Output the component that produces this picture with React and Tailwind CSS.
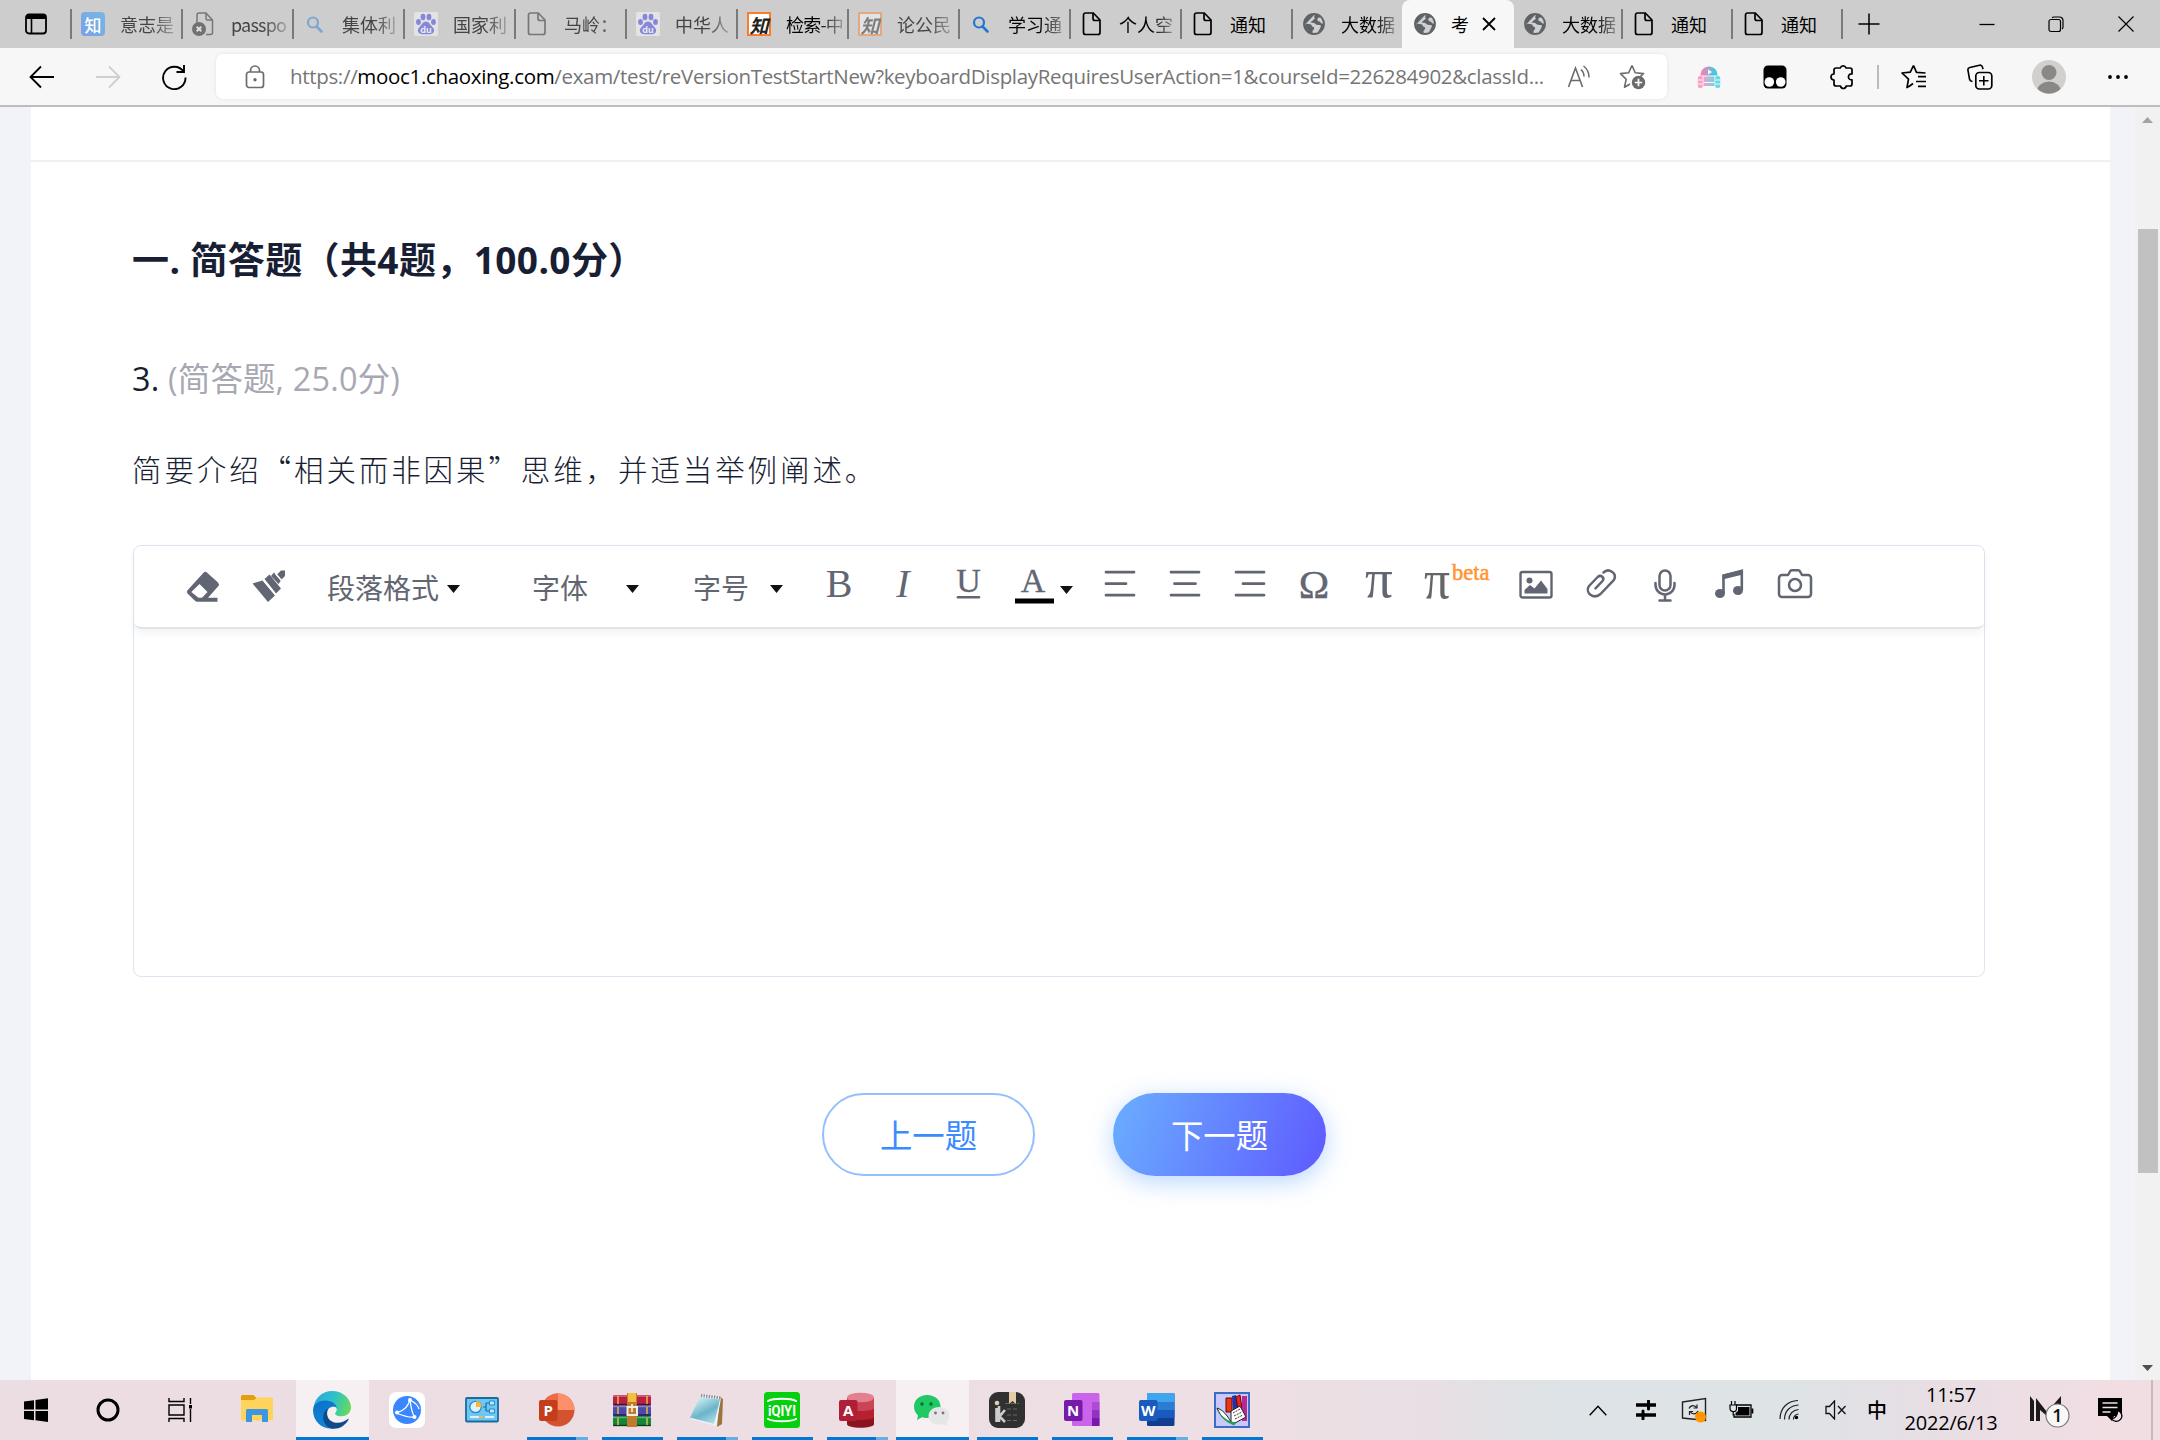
import React from "react";

const Svg = ({ w = 24, h = 24, vb, className = "", children }) => (
  <svg width={w} height={h} viewBox={vb || `0 0 ${w} ${h}`} fill="none" className={"shrink-0 " + className}>
    {children}
  </svg>
);

/* ---------- favicons ---------- */
const PageIcon = ({ c = "#000" }) => (
  <Svg>
    <path d="M5.5 1h7.8L20 8v12.5a2 2 0 0 1-2 2H5.500a2 2 0 0 1-2-2V3a2 2 0 0 1 2-2Z" stroke={c} strokeWidth="1.7" />
    <path d="M13 1.300V6.500a2 2 0 0 0 2 2h5" stroke={c} strokeWidth="1.700" />
  </Svg>
);
const BrokenPage = () => (
  <Svg>
    <path d="M5 11V3a2 2 0 0 1 2-2h7l6.500 7v12.500a2 2 0 0 1-2 2H14" stroke="#777" strokeWidth="1.500" />
    <path d="M14 1.300V6.500a1.500 1.500 0 0 0 1.500 1.500h5" stroke="#777" strokeWidth="1.500" />
    <circle cx="7" cy="17" r="7" fill="#717171" />
    <path d="m4.700 14.700 4.600 4.600m0-4.600-4.600 4.600" stroke="#ddd" strokeWidth="2" />
  </Svg>
);
const Zhi = () => (
  <div className="flex h-6 w-6 items-center justify-center rounded-[4px] bg-linear-to-tr from-[#7b9fe6] to-[#74b8e6] font-['Noto_Sans_CJK_SC',sans-serif] text-[17px] leading-none font-medium text-white">知</div>
);
const Search = ({ c = "#1f78cf" }) => (
  <Svg>
    <circle cx="10" cy="10.500" r="5" stroke={c} strokeWidth="2.200" />
    <path d="m13.500 14.500 5 5" stroke={c} strokeWidth="2.600" strokeLinecap="round" />
  </Svg>
);
const Paw = () => (
  <Svg>
    <rect width="24" height="24" rx="2" fill="#e3e3e6" />
    <g fill="#8587d8">
      <ellipse cx="4.500" cy="10" rx="2.400" ry="3" />
      <ellipse cx="9" cy="5" rx="2.400" ry="3.200" />
      <ellipse cx="15" cy="5" rx="2.400" ry="3.200" />
      <ellipse cx="19.500" cy="10" rx="2.400" ry="3" />
      <path d="M12 9.500c3 0 4 3 6 5s2.600 3.500 1.800 5.500c-1 2.300-3.800 2.300-7.800 2.300s-6.800 0-7.800-2.300C3.400 18 4 16.500 6 14.500s3-5 6-5Z" />
    </g>
    <text x="12" y="20.500" fontSize="9" fontWeight="700" fill="#e8e8f2" textAnchor="middle" fontFamily="Inter, sans-serif">du</text>
  </Svg>
);
const CnkiIcon = ({ faded }) => (
  <div className={"flex h-6 w-6 items-center justify-center border-2 border-[#ff7a2a] bg-white font-['Noto_Sans_CJK_SC',sans-serif] text-[19px] leading-none font-bold text-[#222] italic " + (faded ? "opacity-45" : "")}>知</div>
);
const Globe = () => (
  <Svg>
    <circle cx="12" cy="12" r="10" stroke="#5f6368" strokeWidth="1.800" fill="#cfd0d1" />
    <path d="M13 2c-6-.5-10.500 4-10.800 9.500L7 12c2 .2 3 1.200 3 2.500 1.800 0 2.500 1 2 2.500l-1.500 2v2.800C6 21.500 3 18 2.200 13.500M13 2l-1 3.500c2 .8 0 2.200-1 2.500-.5 1.300-2 1.300-2.500 2.500 2-.3 4.500.4 5.500 2 2 1 4.500-.5 5 1.500-1 3-2.500 4.500-3 6.500 4-1.500 6-5 5.800-9-2 .4-3.300-.5-4-2-1.500.3-2.700-.8-2.500-2.500.6-1.500 2.300-1.700 3.500-1.500V4C17 2.500 15 2 13 2Z" fill="#5f6368" />
  </Svg>
);

const tabs = [
  { icon: <Zhi />, t: "意志是", d: 1 },
  { icon: <BrokenPage />, t: "passpo", d: 1, tight: 1 },
  { icon: <Search c="#7fa6cc" />, t: "集体利", d: 1 },
  { icon: <Paw />, t: "国家利", d: 1 },
  { icon: <PageIcon c="#777" />, t: "马岭：", d: 1 },
  { icon: <Paw />, t: "中华人", d: 1 },
  { icon: <CnkiIcon />, t: "检索-中", tight: 1 },
  { icon: <CnkiIcon faded />, t: "论公民", d: 1 },
  { icon: <Search />, t: "学习通" },
  { icon: <PageIcon />, t: "个人空" },
  { icon: <PageIcon />, t: "通知", plain: 1 },
  { icon: <Globe />, t: "大数据" },
];

const Label = ({ t, d, plain, tight }) => (
  <span
    className={
      "ml-[15px] w-[58px] text-[18px] leading-6 whitespace-nowrap " +
      (d ? "text-[#444] " : "text-black ") +
      (tight ? "tracking-[-0.800px] " : "") +
      (plain ? "" : "[mask-image:linear-gradient(to_right,#000_55%,rgba(0,0,0,.2)_100%)]")
    }
  >
    {t}
  </span>
);
const Tab = ({ icon, t, d, plain, tight }) => (
  <div className="flex h-[47px] w-[111px] shrink-0 items-center">
    <div className="h-[30px] w-[2px] shrink-0 bg-[#797979]" />
    <div className="ml-[9px] shrink-0">{icon}</div>
    <Label t={t} d={d} plain={plain} tight={tight} />
  </div>
);

const TabStrip = () => (
  <div className="flex h-[48px] w-full items-center bg-[#cdcdcd] font-['Noto_Sans_CJK_SC',sans-serif]">
    <div className="flex w-[70px] justify-center pl-[2px]">
      <Svg>
        <rect x="2" y="2.500" width="20" height="19" rx="3" stroke="#000" strokeWidth="1.800" />
        <path d="M2 7V5a3 3 0 0 1 3-3h14a3 3 0 0 1 3 3v2Z" fill="#000" />
        <path d="M7.500 7v14" stroke="#000" strokeWidth="1.600" />
      </Svg>
    </div>
    {tabs.map((x, i) => (
      <Tab key={i} {...x} />
    ))}
    <div className="flex h-[48px] w-[112px] shrink-0 items-center rounded-t-[8px] bg-[#f7f7f7] pb-px pl-[11px]">
      <Globe />
      <span className="ml-[14px] w-[18px] text-[18px] leading-6 text-black">考</span>
      <Svg w={14} h={14} className="ml-[13px]">
        <path d="m1 1 12 12M13 1 1 13" stroke="#000" strokeWidth="1.800" />
      </Svg>
    </div>
    <div className="flex h-[47px] w-[107px] shrink-0 items-center pl-[9px]">
      <Globe />
      <Label t="大数据" />
    </div>
    {[0, 1].map((i) => (
      <div key={i} className="flex h-[47px] w-[110px] shrink-0 items-center">
        <div className="h-[30px] w-[2px] bg-[#797979]" />
        <div className="ml-[9px]"><PageIcon /></div>
        <Label t="通知" plain />
      </div>
    ))}
    <div className="h-[30px] w-[2px] bg-[#797979]" />
    <Svg w={22} h={22} className="ml-[15px]"><path d="M11 .5v21M.5 11h21" stroke="#000" strokeWidth="1.500" /></Svg>
    <div className="ml-auto flex items-center pr-[26px]">
      <Svg w={16} h={16}><path d="M.5 8.500h15" stroke="#000" strokeWidth="1.300" /></Svg>
      <Svg w={16} h={17} className="ml-[53px]">
        <rect x="1" y="3.500" width="11.500" height="12" rx="2" stroke="#000" strokeWidth="1.200" />
        <path d="M4 1.700A3 3 0 0 1 6 1h5.500a3.500 3.500 0 0 1 3.500 3.500V11a3 3 0 0 1-.8 2" stroke="#000" strokeWidth="1.200" />
      </Svg>
      <Svg w={16} h={16} className="ml-[54px]"><path d="m.5.5 15 15m0-15-15 15" stroke="#000" strokeWidth="1.200" /></Svg>
    </div>
  </div>
);

const AddressBar = () => (
  <div className="flex h-[59px] w-full items-center border-b-2 border-[#bdbdbd] bg-[#f7f7f7]">
    <Svg w={26} h={24} className="ml-[29px]"><path d="M12 1.500 1.500 12 12 22.500M1.500 12H25" stroke="#000" strokeWidth="1.800" /></Svg>
    <Svg w={26} h={24} className="ml-[40px]"><path d="M14 1.500 24.500 12 14 22.500M24.500 12H1" stroke="#cfcfcf" strokeWidth="1.800" /></Svg>
    <Svg w={26} h={26} className="ml-[40px]">
      <path d="M22.500 7.500A11.200 11.200 0 1 0 24.500 13.500M23 1v7h-7.500" stroke="#000" strokeWidth="1.900" />
    </Svg>
    <div className="ml-[29px] flex h-[45px] w-[1451px] shrink-0 items-center rounded-[7px] bg-white shadow-[0_0_4px_rgba(0,0,0,0.08)]">
      <Svg w={20} h={24} className="ml-[29px]">
        <rect x="1.500" y="7" width="17" height="15.500" rx="2.500" stroke="#6b6b6b" strokeWidth="1.700" />
        <path d="M5.500 7V5.500a4.500 4.500 0 0 1 9 0V7" stroke="#6b6b6b" strokeWidth="1.700" />
        <circle cx="10" cy="14.700" r="1.700" fill="#6b6b6b" />
      </Svg>
      <div className="ml-[25px] w-[1262px] pb-px font-['Open_Sans',sans-serif] text-[20.500px] leading-8 tracking-[-0.325px] whitespace-nowrap text-[#757575]">
        https://<span className="text-black">mooc1.chaoxing.com</span>/exam/test/reVersionTestStartNew?keyboardDisplayRequiresUserAction=1&amp;courseId=226284902&amp;classId...
      </div>
      <Svg w={25} h={24} className="ml-[15px]">
        <path d="M1.500 22 8.500 3l7 19M4 15.500h9" stroke="#6b6b6b" strokeWidth="1.600" />
        <path d="M14 4.500a9 9 0 0 1 3 7M16.500 1a14 14 0 0 1 5.500 11.500" stroke="#6b6b6b" strokeWidth="1.500" />
      </Svg>
      <Svg w={27} h={26} className="ml-[27px]">
        <path d="m13 1.500 3.200 7.300 8.300.8-3 2.700M11 20l-5.500 3.200 1.700-8L1.500 9.600l8.100-.8L13 1.500" stroke="#6b6b6b" strokeWidth="1.600" strokeLinejoin="round" />
        <circle cx="19.500" cy="18.500" r="6.700" fill="#6b6b6b" />
        <path d="M19.500 14.800v7.400M15.800 18.500h7.400" stroke="#fff" strokeWidth="1.700" />
      </Svg>
    </div>
    <Svg w={24} h={24} className="ml-[30px]">
      <defs>
        <linearGradient id="pk" x1="0" y1="0" x2="24" y2="0" gradientUnits="userSpaceOnUse">
          <stop offset=".2" stopColor="#ff7eb2" /><stop offset=".75" stopColor="#3fcbe0" />
        </linearGradient>
      </defs>
      <path d="M3.500 10.500C3.500 5 7 1.500 12 1.500s8.500 3.500 8.500 9Z" fill="url(#pk)" />
      <path d="M6.500 11.500h11V21h-11Z" fill="url(#pk)" opacity=".75" />
      <rect x=".8" y="11" width="5" height="12" rx="2" fill="#ff9cc4" /><rect x="18.200" y="11" width="5" height="12" rx="2" fill="#62dbe6" />
      <path d="M11 4.500v5l4-2.500Z" fill="#fff" />
      <path d="M.8 15h5m12.400 0h5M.8 19h5m12.400 0h5M6.500 17.500h11" stroke="#f7f7f7" strokeWidth="1" />
    </Svg>
    <Svg w={24} h={24} className="ml-[42px]">
      <rect x=".5" y=".5" width="23" height="23" rx="4.500" fill="#000" />
      <circle cx="6.300" cy="17" r="4.800" fill="#fff" /><circle cx="17.700" cy="17" r="4.800" fill="#fff" />
    </Svg>
    <Svg w={24} h={26} className="ml-[43px]">
      <path d="M6 4h4.300a3 3 0 0 1 5.700 0h4a2 2 0 0 1 2 2v4c-4.500-.7-5 6.300 0 5.800V20a2 2 0 0 1-2 2h-3.800c-.7 3.300-5 3.300-5.700 0H6a2 2 0 0 1-2-2v-4c-4-.3-4-5.700 0-6V6a2 2 0 0 1 2-2Z" stroke="#000" strokeWidth="1.700" strokeLinejoin="round" />
    </Svg>
    <div className="ml-[23px] h-[24px] w-[2px] bg-[#bbb]" />
    <Svg w={26} h={25} className="ml-[22px]">
      <path d="m12.500 1.500 3 6.800 9 .7M8 22.300 6 23.500l1.500-8.300L1 9l8.300-.8 3.200-6.700M8 22.500l4-3" stroke="#000" strokeWidth="1.700" strokeLinejoin="round" />
      <path d="M17 12.700h8M15 17.500h10M17 22.300h8" stroke="#000" strokeWidth="1.700" />
    </Svg>
    <Svg w={26} h={26} className="ml-[40px]">
      <path d="m5.500 17.500-1-.2a3 3 0 0 1-2-2.300L1 6.500a2.500 2.500 0 0 1 1.800-3l9.700-2.300a2.500 2.500 0 0 1 3 2l.5 2" stroke="#000" strokeWidth="1.600" />
      <rect x="8.800" y="8.500" width="16" height="16.500" rx="3.500" stroke="#000" strokeWidth="1.700" />
      <path d="M16.800 12v9.500M12 16.800h9.500" stroke="#000" strokeWidth="1.600" />
    </Svg>
    <Svg w={34} h={34} className="ml-[39px]">
      <defs><clipPath id="av"><circle cx="17" cy="17" r="16.500" /></clipPath></defs>
      <circle cx="17" cy="17" r="17" fill="#d2d0ce" />
      <g clipPath="url(#av)" fill="#8a8886"><circle cx="17" cy="12.500" r="7.500" /><ellipse cx="17" cy="31.500" rx="12" ry="10" /></g>
    </Svg>
    <Svg w={22} h={6} className="ml-[41px]">
      <g fill="#000"><circle cx="3" cy="3" r="1.900" /><circle cx="11" cy="3" r="1.900" /><circle cx="19" cy="3" r="1.900" /></g>
    </Svg>
  </div>
);

/* ---------- editor ---------- */
const G = "#616672";
const Caret = ({ className }) => (
  <Svg w={13} h={8} className={className}><path d="M0 0h13L6.500 8Z" fill="#111" /></Svg>
);
const Glyph = ({ children, w = 36 }) => (
  <Svg w={w} h={36} className="overflow-visible">{children}</Svg>
);
const serif = "'Liberation Serif', serif";
const Slot = ({ wide, children }) => (
  <div className={"flex shrink-0 justify-center " + (wide ? "w-[66px]" : "w-[64.700px]")}>{children}</div>
);

const EditorToolbar = () => (
  <div className="flex h-[83px] items-center rounded-[7px] border-b-2 border-[#dfe4ea] pb-[6px] pl-[36px] font-['Noto_Sans_CJK_SC',sans-serif] text-[28px] text-[#616672] shadow-[0_4px_8px_rgba(0,0,0,0.05)]">
    <Slot wide>
      <Glyph>
        <path d="M18.500 6.800a2.600 2.600 0 0 1 3.700 0L33 16.500a3 3 0 0 1 0 4L23 31.800h9.500v4H12.500a4 4 0 0 1-2.800-1.200L3 28a3 3 0 0 1 0-4.200Z" fill={G} />
        <path d="m14.500 18 8 8-5.500 5.800h-3.500L6.300 26Z" fill="#fff" />
      </Glyph>
    </Slot>
    <Slot wide>
      <Glyph>
        <path d="m1.500 17.500 10-3 12.500 15-7 6.500Z" fill={G} />
        <path d="m13.500 13 5-4.500L30 22.500l-5 5Z" fill={G} />
        <path d="m20 10 3-3.500 7 8-2.500 3.500Zm5.500-1 4.500-4.500h4v5.500l-4 4Z" fill={G} />
        <path d="m12.300 13.500 12.300 15M24.500 7.500l6 7" stroke="#fff" strokeWidth="1.600" />
      </Glyph>
    </Slot>
    <div className="flex w-[205px] shrink-0 items-center pl-[25px] pt-[6px]">段落格式<Caret className="ml-[8px] mt-1" /></div>
    <div className="flex w-[160px] shrink-0 items-center pl-[25px] pt-[6px]">字体<Caret className="ml-[38px] mt-1" /></div>
    <div className="flex w-[140px] shrink-0 items-center pl-[26px] pt-[6px]">字号<Caret className="ml-[21px] mt-1" /></div>
    <Slot><Glyph><text x="18" y="31" textAnchor="middle" fontFamily={serif} fontSize="40" fill={G}>B</text></Glyph></Slot>
    <Slot><Glyph><text x="17" y="31" textAnchor="middle" fontFamily={serif} fontStyle="italic" fontSize="40" fill={G}>I</text></Glyph></Slot>
    <Slot>
      <Glyph>
        <text x="17.500" y="26" textAnchor="middle" fontFamily={serif} fontSize="34" fill={G} stroke={G} strokeWidth=".3">U</text>
        <path d="M7 31.300h21" stroke={G} strokeWidth="2.600" strokeLinecap="round" />
      </Glyph>
    </Slot>
    <div className="flex w-[87px] shrink-0 items-center pl-[13px]">
      <Glyph w={40}>
        <text x="19" y="26" textAnchor="middle" fontFamily={serif} fontSize="34" fill={G} stroke={G} strokeWidth=".3">A</text>
        <path d="M1 35h39" stroke="#000" strokeWidth="5" />
      </Glyph>
      <Caret className="ml-[6px] mt-3" />
    </div>
    {["M4 6.200h28M4 17.700h20M4 29.200h28", "M4 6.200h28M7.500 17.700h21M4 29.200h28", "M4 6.200h28M11 17.700h21M4 29.200h28"].map((d) => (
      <Slot key={d}><Glyph><path d={d} stroke={G} strokeWidth="2.700" strokeLinecap="round" /></Glyph></Slot>
    ))}
    <Slot><Glyph><text x="18" y="31.500" textAnchor="middle" fontFamily={serif} fontSize="41" fill={G} stroke={G} strokeWidth=".4">Ω</text></Glyph></Slot>
    <Slot><Glyph><text x="18" y="31" textAnchor="middle" fontFamily={serif} fontSize="55" fill={G}>π</text></Glyph></Slot>
    <div className="w-[92px] shrink-0 pl-[13px]">
      <Glyph w={70}>
        <text x="-1" y="31.500" textLength="26" lengthAdjust="spacingAndGlyphs" fontFamily={serif} fontSize="55" fill="#666">π</text>
        <text x="27" y="13.500" fontFamily={serif} fontSize="22.500" fill="#ff9430" stroke="#ff9430" strokeWidth=".5">beta</text>
      </Glyph>
    </div>
    <Slot>
      <Glyph>
        <rect x="2.500" y="6" width="31" height="25.500" rx="2" stroke={G} strokeWidth="2.400" />
        <circle cx="11.500" cy="14.500" r="3" fill={G} />
        <path d="M6.500 27.500v-3.500l5.500-5 4.500 3.500 6.500-8 6.500 8.500v4.500Z" fill={G} />
      </Glyph>
    </Slot>
    <Slot>
      <Glyph>
        <path d="M20.500 6.500C25.500 1.500 34.500 7 31 13.800L17.500 28C10.500 34 1.500 26.500 6 20L14.700 11C18 8.200 22 11.800 19.500 15L12.500 22.300" stroke={G} strokeWidth="2.500" strokeLinecap="round" strokeLinejoin="round" />
      </Glyph>
    </Slot>
    <Slot>
      <Glyph>
        <rect x="12.500" y="4.500" width="11" height="20" rx="5.500" stroke={G} strokeWidth="2.500" />
        <path d="M8.500 17v2a9.500 9.500 0 0 0 19 0v-2M18 28.500v6M12.500 34.500h11" stroke={G} strokeWidth="2.500" strokeLinecap="round" />
      </Glyph>
    </Slot>
    <Slot>
      <Glyph>
        <path d="M11.500 27V9.800L29.800 5v19" stroke={G} strokeWidth="2.600" />
        <path d="M10.500 8.500 31 3.500v5l-20.500 5Z" fill={G} />
        <ellipse cx="8" cy="27.500" rx="5" ry="4.500" fill={G} /><ellipse cx="26" cy="24.500" rx="5" ry="4.500" fill={G} />
      </Glyph>
    </Slot>
    <Slot>
      <Glyph>
        <path d="M5 9h6l2-3.500a2 2 0 0 1 1.800-1.200h6.400A2 2 0 0 1 23 5.500L25 9h6a3 3 0 0 1 3 3v16a3 3 0 0 1-3 3H5a3 3 0 0 1-3-3V12a3 3 0 0 1 3-3Z" stroke={G} strokeWidth="2.500" strokeLinejoin="round" />
        <circle cx="18" cy="19" r="6" stroke={G} strokeWidth="2.500" />
      </Glyph>
    </Slot>
  </div>
);

const Page = () => (
  <div className="flex h-[1273px] w-full bg-[#f1f3f8]">
    <div className="ml-[31px] w-[2079px] shrink-0 bg-white text-[#181e33]">
      <div className="h-[55px] border-b-2 border-[#f0f0f2]" />
      <div className="pl-[102px] font-['Open_Sans','Noto_Sans_CJK_SC',sans-serif]">
        <h1 className="-ml-px mt-[71px] h-[54px] text-[37px] leading-[54px] font-bold tracking-[0.400px] whitespace-nowrap">
          一. 简答题（共4题，100.0分）
        </h1>
        <div className="-ml-px mt-[67px] h-[48px] text-[32.400px] leading-[48px] tracking-[0.200px] whitespace-nowrap">
          3. <span className="text-[#a8a8b3]">(简答题, 25.0分)</span>
        </div>
        <p className="-ml-px mt-[42px] h-[48px] font-['Noto_Sans_CJK_SC',sans-serif] text-[29.500px] leading-[48px] font-light tracking-[2.900px] whitespace-nowrap">
          简要介绍“相关而非因果”思维，并适当举例阐述。
        </p>
        <div className="mt-[53px] h-[432px] w-[1852px] rounded-[8px] border-[1.500px] border-[#dbe6f2]">
          <EditorToolbar />
        </div>
        <div className="mt-[116px] flex gap-[78px] pl-[689px] text-[32.400px]">
          <button className="h-[83px] w-[213px] rounded-full border-2 border-[#94bfff] pt-[2px] text-[#3a8bff]">上一题</button>
          <button className="h-[83px] w-[213px] rounded-full bg-[linear-gradient(110deg,#69a8ff_8%,#5f5eff_95%)] pt-[2px] text-white shadow-[0_6px_24px_rgba(58,139,255,0.35)]">下一题</button>
        </div>
      </div>
    </div>
    <div className="ml-auto flex w-[25px] flex-col items-center bg-[#f1f1f1]">
      <Svg w={11} h={6} className="mt-[10px]"><path d="M0 6h11L5.500 0Z" fill="#a3a3a3" /></Svg>
      <div className="mt-[106px] h-[944px] w-[20px] bg-[#c1c1c1]" />
      <Svg w={11} h={6} className="mt-auto mb-[9px]"><path d="M0 0h11L5.500 6Z" fill="#505050" /></Svg>
    </div>
  </div>
);

/* ---------- taskbar ---------- */
const Office = ({ l, tile, children }) => (
  <Svg w={38} h={40}>
    {children}
    <rect x="1" y="10" width="18.500" height="21" rx="2" fill={tile} />
    <text x="10.200" y="26" fontSize="15" fontWeight="700" fill="#fff" textAnchor="middle" fontFamily="'Open Sans', sans-serif">{l}</text>
  </Svg>
);

const Edge = () => (
  <Svg w={38} h={38} vb="0 0 36 36">
    <defs>
      <linearGradient id="eg" x1="2" y1="8" x2="36" y2="18" gradientUnits="userSpaceOnUse"><stop stopColor="#2aa9e0" /><stop offset=".5" stopColor="#2ec3c6" /><stop offset="1" stopColor="#6bdc52" /></linearGradient>
      <linearGradient id="eb" x1="0" y1="14" x2="10" y2="36" gradientUnits="userSpaceOnUse"><stop stopColor="#0b74c9" /><stop offset="1" stopColor="#1186d8" /></linearGradient>
    </defs>
    <path d="M.5 16C1.500 6.500 9 0 18 0c10.500 0 18 7.500 18 15.500 0 5.500-4.500 8.500-9 8.500-4.500 0-6.500-1.700-6-3 1.500-2 1.700-3 1.200-5C20 10 8 7 .5 16Z" fill="url(#eg)" />
    <path d="M0 18C.5 11.500 6.500 9 11.500 9c6.500 0 10.700 3.500 11 7-2-2-8-1.700-9.500 4-1.500 6 3 13 10 14.500C12 38.500 0 31 0 18Z" fill="url(#eb)" />
    <path d="M14.500 16.500C12 21 13.500 28 19.500 29.500c5 1.500 9.500 0 13.500-3 .6-.3 1 0 .7.600C30 34 23 37 17 35.500 9 33 6.500 20 14.500 16.500Z" fill="#114a8b" />
  </Svg>
);

const apps = [
  { n: "explorer", el: (
    <Svg w={34} h={36} className="mt-1">
      <path d="M1 2.500A1.500 1.500 0 0 1 2.500 1h11l3 3-3 4H1Z" fill="#e2a00c" />
      <path d="M1 6h13l3-2.500h14.500A1.500 1.500 0 0 1 33 5v20a1.500 1.500 0 0 1-1.500 1.500h-29A1.500 1.500 0 0 1 1 25Z" fill="#ffd35c" />
      <path d="M6 28V16.500A1.500 1.500 0 0 1 7.500 15h19a1.500 1.500 0 0 1 1.500 1.500V28h-6v-7H12v7Z" fill="#3c97df" />
    </Svg>
  ) },
  { n: "edge", el: <Edge />, tile: 1, bar: "full" },
  { n: "browser", el: (
    <Svg w={36} h={36}>
      <rect width="36" height="36" rx="7" fill="#fff" /><circle cx="18" cy="18" r="14" fill="#3a86ff" />
      <path d="M7 21C15 19 20 14 21 6.500M21 8c1 8 2 13 4.500 17M7 21c5 2 13 5 18.500 4M21 8c4 2 8 5 9 9" stroke="#fff" strokeWidth="1.300" />
      <g fill="#fff"><circle cx="21" cy="8" r="2" /><circle cx="8" cy="20.500" r="2" /><circle cx="25.500" cy="25" r="2" /></g>
    </Svg>
  ) },
  { n: "panel", el: (
    <Svg w={34} h={26}>
      <rect x="1" y="1" width="32" height="23.500" rx="1" fill="#6ec6f3" stroke="#1c6ba0" strokeWidth="1.800" />
      <circle cx="10.500" cy="10" r="5.700" fill="#dff3ff" stroke="#2689c9" strokeWidth="1.300" />
      <path d="M11 4v6h5.700a6 6 0 0 0-5.700-6Z" fill="#ffb52e" />
      <path d="M18 10h3m0-4v8m0-8h3m-3 8h3" stroke="#1c6ba0" strokeWidth="1.200" />
      <path d="M24.500 4h5v4h-5Zm0 8h5v4h-5Z" fill="#b9e6ff" stroke="#2689c9" />
      <path d="M5 20h12m3 0h9" stroke="#fff" strokeWidth="1.700" /><path d="M14 20h4" stroke="#ffb52e" strokeWidth="2" />
    </Svg>
  ) },
  { n: "ppt", bar: "multi", el: (
    <Office l="P" tile="#c43e1c"><circle cx="20" cy="20" r="16.500" fill="#d35230" /><path d="M20 3.500A16.500 16.500 0 0 1 36.500 20H20Z" fill="#ff8f6b" /><path d="M3.500 20A16.500 16.500 0 0 1 20 3.500V20Z" fill="#ed6c47" /></Office>
  ) },
  { n: "rar", bar: "one", el: (
    <Svg w={38} h={34}>
      <rect y="2" width="38" height="10" rx="1" fill="#b91f45" /><rect y="12" width="38" height="11" rx="1" fill="#4b49a8" /><rect y="23" width="38" height="10" rx="1" fill="#12873c" />
      <path d="M0 3h38M0 13.500h38M0 24.500h38" stroke="#ffffff55" strokeWidth="1.500" /><path d="M0 11.300h38M0 22h38M0 32.500h38" stroke="#0008" strokeWidth="1.300" />
      <path d="M5 3v8m0 3v7m0 4v7M34 3v8m0 3v7m0 4v7" stroke="#f0c13a" strokeWidth="1.400" />
      <path d="M14 0h10v34H14Z" fill="#c27a2c" /><path d="M15 0h8v9h-8Z" fill="#f0c040" />
      <rect x="14.500" y="14" width="9.500" height="8" stroke="#f4eede" strokeWidth="2" /><path d="M19 11v8" stroke="#f4eede" strokeWidth="1.700" />
    </Svg>
  ) },
  { n: "notepad", bar: "multi", el: (
    <Svg w={36} h={34}>
      <defs><linearGradient id="np" x1="8" y1="5" x2="22" y2="32" gradientUnits="userSpaceOnUse"><stop stopColor="#d4eef4" /><stop offset=".55" stopColor="#69b5c9" /><stop offset="1" stopColor="#b4dfe9" /></linearGradient></defs>
      <path d="m31 4 3 2-1 25-5 3Z" fill="#9b7440" /><path d="M12 2 32 5l-5 28L2 26Z" fill="#eef5f7" /><path d="m11 4 20 2.500L25 31 1 24.500Z" fill="url(#np)" />
      <path d="M12 2.500 32 5" stroke="#888" strokeWidth="3" strokeDasharray="1.300 1.300" />
    </Svg>
  ) },
  { n: "iqiyi", bar: "one", el: (
    <Svg w={36} h={36}>
      <rect width="36" height="36" rx="3.500" fill="#05cf0e" />
      <path d="M4 10V9c5-3 23-3 28 0v1M4 26v1c5 3 23 3 28 0v-1" stroke="#fff" strokeWidth="2" />
      <text x="18" y="23.500" fontSize="15.500" fontWeight="700" fill="#fff" textAnchor="middle" textLength="28" lengthAdjust="spacingAndGlyphs" fontFamily="Roboto, sans-serif">iQIYI</text>
    </Svg>
  ) },
  { n: "access", bar: "multi", el: (
    <Office l="A" tile="#b01e38"><path d="M9 8v26c0 5 27 5 27 0V8Z" fill="#8a1420" /><path d="M9 8v19c0 4 27 4 27 0V8Z" fill="#b7202f" /><path d="M9 8v10c0 4 27 4 27 0V8Z" fill="#ca4457" /><ellipse cx="22.500" cy="7.500" rx="13.500" ry="4.800" fill="#e4808e" /></Office>
  ) },
  { n: "wechat", tile: 1, bar: "full", el: (
    <Svg w={38} h={34}>
      <path d="M14 2c8 0 13.500 5 13.500 11.500S22 25 14 25c-2 0-3.500-.3-5-.8L4 27l1-4.500C2.500 20 1 17.500 1 13.500 1 7 6.500 2 14 2Z" fill="#20c964" />
      <path d="M26 14c6 0 10.500 4 10.500 9 0 3-1.200 5-3 6.500l.7 3.500-4-2c-1 .4-2.500.6-4 .6-6 0-10.700-3.700-10.700-8.600S20 14 26 14Z" fill="#e6e6e6" />
      <circle cx="9" cy="11" r="1.700" fill="#0a6b35" /><circle cx="18" cy="11" r="1.700" fill="#0a6b35" /><circle cx="22.500" cy="20" r="1.400" fill="#777" /><circle cx="30" cy="20" r="1.400" fill="#777" />
    </Svg>
  ) },
  { n: "koodo", bar: "one", el: (
    <Svg w={36} h={36}>
      <rect width="36" height="36" rx="9" fill="#303030" />
      <path d="M16 11.500h14M18 17h12M18 23h12M18 28.500h12" stroke="#666" strokeDasharray="4 2" />
      <path d="M20 0h7v12l-3.500-3L20 12Z" fill="#e6cba8" />
      <path d="M7.500 16v14M10 14v16M16 18l-5.500 6.500L16 30" stroke="#ccc" strokeWidth="2.600" />
      <circle cx="8" cy="11" r="2.300" fill="#e6cba8" />
    </Svg>
  ) },
  { n: "onenote", bar: "one", el: (
    <Office l="N" tile="#7719aa"><rect x="9" y="3" width="27.500" height="33" rx="1.500" fill="#ca64ea" /><path d="M29 12h7.500v8H29Z" fill="#ae4bd5" /><path d="M29 20h7.500v8H29Z" fill="#9332bf" /><path d="M29 28h7.500v8H29Z" fill="#7719aa" /></Office>
  ) },
  { n: "word", bar: "multi", el: (
    <Office l="W" tile="#185abd"><rect x="9" y="3" width="27.500" height="33" rx="1.500" fill="#103f91" /><path d="M9 3h27.500v9H9Z" fill="#41a5ee" /><path d="M9 12h27.500v8H9Z" fill="#2b7cd3" /><path d="M9 20h27.500v8H9Z" fill="#185abd" /></Office>
  ) },
  { n: "books", bar: "one", el: (
    <Svg w={36} h={36}>
      <rect x="1" y="1" width="34" height="34" fill="#c8c8fa" stroke="#3c6dc6" strokeWidth="2" />
      <path d="M12 6h6v14h-6Z" fill="#e23a18" stroke="#700" /><path d="m18 4 4-1 2 15-5 2Z" fill="#2233a8" /><path d="m22 5 4-2 2 13-4 2Z" fill="#e8222a" stroke="#700" /><path d="M28 4h5v25h-5Z" fill="#b52a95" />
      <path d="M3 16c6 2 10 7 14 14-5-1-9-3-14-14Z" fill="#fff" stroke="#222" /><path d="M17 19l9-5 6 11-11 6-4-1Z" fill="#fff" stroke="#222" /><path d="M2 16c4 8 9 14 18 17.500l2-2.500c-9-2-15-7-20-15Z" fill="#1fa354" />
      <path d="m19 21 7-4m-6 7 8-4m-7 7 8-4" stroke="#333" strokeDasharray="2 1" />
    </Svg>
  ) },
];

const Bar = ({ kind }) => {
  if (kind === "full") return <div className="h-[3px] w-full bg-[#0078d7]" />;
  if (kind === "one") return <div className="h-[3px] w-[61px] bg-[#0078d7]" />;
  if (kind === "multi")
    return <div className="flex h-[3px] w-[61px] bg-[#0078d7]"><div className="ml-auto w-[12px] bg-[#66aee6]" /></div>;
  return <div className="h-[3px]" />;
};

const Taskbar = () => (
  <div className="flex h-[60px] w-full items-center bg-[linear-gradient(90deg,#ecdde2_0%,#eedfe4_58%,#e8dfe4_66%,#dde3e6_72%,#dee3e6_83%,#e8dee4_90%,#f0dee3_97%)]">
    <div className="flex w-[72px] justify-center">
      <Svg><path d="M0 3.500 10 2.200v9.300H0ZM11.500 2 24 .2v11.300H11.500ZM0 13h10v9.300L0 21Zm11.500 0H24v11l-12.500-1.700Z" fill="#000" /></Svg>
    </div>
    <div className="flex w-[72px] justify-center"><Svg><circle cx="12" cy="12" r="10" stroke="#000" strokeWidth="3" /></Svg></div>
    <div className="flex w-[76px] pl-[24px]">
      <Svg><path d="M1 0v3.500h15V0M1 24v-3.500h15V24M1 7h15v10H1ZM22.500 0v6m0 5v13" stroke="#000" strokeWidth="1.400" /><path d="M21 7h3v3.500h-3Z" fill="#000" /></Svg>
    </div>
    {apps.map((a) => (
      <div key={a.n} className={"flex h-[60px] shrink-0 flex-col items-center " + (a.tile ? "mx-px w-[73px] bg-[#f7f0f3]" : "w-[75px]")}>
        <div className="flex h-[57px] items-center pt-[2px] pr-[2px]">{a.el}</div>
        <Bar kind={a.bar} />
      </div>
    ))}
    <div className="ml-auto flex h-full items-center">
      <Svg w={18} h={11}><path d="m.7 10.300 8.300-9 8.300 9" stroke="#000" strokeWidth="1.400" /></Svg>
      <Svg w={22} h={20} className="ml-[28px]">
        <path d="M1 5h20M1 15h20" stroke="#000" strokeWidth="3.400" /><path d="M13.500 1v8M8 11v8" stroke="#000" strokeWidth="3" strokeLinecap="round" />
      </Svg>
      <Svg w={26} h={26} className="ml-[24px]">
        <path d="M1.500 5 24.500 1.500v22L1.500 21Z" stroke="#222" strokeWidth="1.400" />
        <path d="M8 11.500c2-4 6-3.500 8-.5M16 7.500V11h-3.500M17 14c-2 4-6 3.500-8 .5M8.500 18v-3.500H12" stroke="#222" strokeWidth="1.200" />
        <circle cx="19.500" cy="20" r="5.500" fill="#ff9500" />
      </Svg>
      <Svg w={25} h={20} className="ml-[22px]">
        <path d="M7 5h15v12H5v-3" stroke="#000" strokeWidth="1.300" /><path d="M9 7h11.500v8.500H6.500V13L9 11Z" fill="#000" /><path d="M22.500 8.500h1.800v5h-1.800Z" fill="#000" />
        <path d="M2.500 1v4M6 1v4M1 5h6.500v3.500a3.200 3.200 0 0 1-6.500 0ZM4.200 11v4.500" stroke="#000" strokeWidth="1.200" />
      </Svg>
      <Svg w={22} h={22} className="ml-[25px]">
        <path d="M1 20C1 9.500 8 2 19 1.500M5.500 20.500C5.500 12 11 6.500 19.500 6M10 20.500C10 15 14 11 19.500 10.500M14.500 20.500c0-3 2-5 5-5.500" stroke="#222" strokeWidth="1.200" /><circle cx="17.500" cy="18.500" r="1.700" fill="#000" />
      </Svg>
      <Svg w={22} h={20} className="ml-[24px]">
        <path d="M1 6.500h3.500L9.500 1v18l-5-5.500H1ZM13 6l7.500 8m0-8L13 14" stroke="#111" strokeWidth="1.300" />
      </Svg>
      <span className="ml-[20px] w-[20px] font-['Noto_Sans_CJK_SC',sans-serif] text-[20px] leading-[24px] font-medium text-black">中</span>
      <div className="ml-[12px] w-[104px] pb-[2px] text-center font-['Open_Sans',sans-serif] text-[20px] leading-[28px] tracking-[-0.200px] text-black">
        <div>11:57</div><div>2022/6/13</div>
      </div>
      <Svg w={42} h={40} className="ml-[26px]">
        <path d="M1 6l4 5v20H1Zm6 2L18 22 32 6v22h-4V17l-9 10L11 20v11H7Z" fill="#1a1a1a" />
        <circle cx="28.500" cy="25.500" r="11.500" fill="#f8f8f8" stroke="#777" strokeWidth="1.200" />
        <text x="28.500" y="32" fontSize="18" fontWeight="600" textAnchor="middle" fill="#111" fontFamily="'Open Sans', sans-serif">1</text>
      </Svg>
      <Svg w={26} h={26} className="ml-[26px]">
        <path d="M1 1h24v18h-8l-2 5-5-5H1Z" fill="#000" /><path d="M5.500 6h15M5.500 10.500h15M5.500 15h8" stroke="#efdfe4" strokeWidth="1.500" />
        <path d="M20.500 13.500a5.500 5.500 0 1 1-6 8c3.500.5 6.500-3.500 6-8Z" fill="#f0dfe4" stroke="#000" strokeWidth="1.300" />
      </Svg>
      <div className="mr-[7px] ml-[28px] h-full w-[2px] bg-[#c9b8bd]" />
    </div>
  </div>
);

export default function App() {
  return (
    <div className="flex h-[1440px] w-[2160px] flex-col overflow-hidden bg-white">
      <TabStrip />
      <AddressBar />
      <Page />
      <Taskbar />
    </div>
  );
}
